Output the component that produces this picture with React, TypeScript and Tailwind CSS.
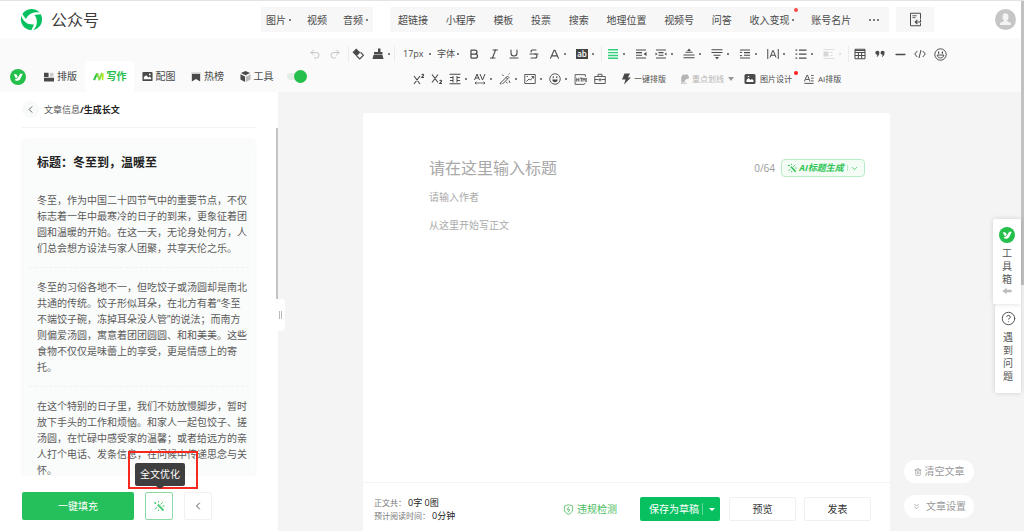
import type { ReactNode } from "react";
import { clsx } from "clsx";
import {
  Bold,
  ChevronDown,
  ChevronLeft,
  ChevronsDown,
  CircleQuestionMark,
  Italic,
  Minus,
  Redo2,
  Strikethrough,
  Trash2,
  Underline,
  Undo2,
} from "lucide-react";

type IconProps = { className?: string; children: ReactNode };

function Icon({ className = "h-3 w-3", children }: IconProps) {
  return (
    <svg
      viewBox="0 0 24 24"
      className={clsx("shrink-0", className)}
      fill="none"
      stroke="currentColor"
      strokeWidth="2.2"
      aria-hidden="true"
    >
      {children}
    </svg>
  );
}

function Dot() {
  return <span className="h-0.5 w-0.5 shrink-0 rounded-full bg-[#555]" />;
}

function Separator() {
  return <span className="mx-px h-4 w-px shrink-0 bg-[#ececec]" />;
}

type ToolProps = {
  label: string;
  menu?: boolean;
  tight?: boolean;
  className?: string;
  children: ReactNode;
};

function Tool({ label, menu, tight, className, children }: ToolProps) {
  return (
    <button type="button" aria-label={label} className={clsx("flex h-5 shrink-0 items-center", className)}>
      <span className="flex w-5 shrink-0 items-center justify-center">{children}</span>
      {menu && (
        <span className={clsx("flex shrink-0 items-center", tight ? "w-[5px]" : "w-2")}>
          <Dot />
        </span>
      )}
    </button>
  );
}

function BrandMark() {
  const blade = "M4.500 11.500A21 21 0 0 1 38 9C30 6.500 22 9 16.500 14C14 16.500 12.500 18.500 11.500 21.500C9 18 6.500 14.500 4.500 11.500Z";
  return (
    <svg viewBox="0 0 44 44" className="h-[23px] w-[23px]" aria-hidden="true">
      <g fill="#07c160">
        <path d={blade} />
        <path d={blade} transform="rotate(120 22 22)" />
        <path d={blade} transform="rotate(240 22 22)" />
      </g>
    </svg>
  );
}

function YiMark() {
  return (
    <svg viewBox="0 0 32 32" className="h-4 w-4 shrink-0" aria-hidden="true">
      <circle cx="16" cy="16" r="16" fill="#25bf4b" />
      <path d="M7.500 10.500h5l3 4.500-2.500 3.500h-1.500Z" fill="#fff" />
      <path d="M25.500 9.500h-5l-5 8c-1.200 1.800-2.500 2.500-5.500 2.500l1 3.500c5 .5 8-.5 9.500-3.500Z" fill="#fff" />
    </svg>
  );
}

function WandIcon({ className }: { className?: string }) {
  return (
    <Icon className={className}>
      <path d="M9.500 9l11.500 12" strokeWidth="3.8" />
      <path d="M15 9l4.500-4.500M3.500 19L8 14.500" strokeWidth="2" />
      <path d="M2.500 6h4M4.500 4v4M11 2v3M19 12h4M11 19v3" strokeWidth="2" />
    </Icon>
  );
}

const insertLinks = ["超链接", "小程序", "模板", "投票", "搜索", "地理位置", "视频号", "问答"];

function Header() {
  return (
    <header className="flex h-[38px] shrink-0 items-center border-t border-[#e4e4e4] bg-white text-[10px] leading-4 text-[#4a4a4a]">
      <div className="flex w-[261px] shrink-0 items-center gap-2 pl-5">
        <BrandMark />
        <h1 className="text-base text-[#3c3c3c]">公众号</h1>
      </div>
      <nav className="flex h-[25px] w-28 shrink-0 items-center justify-between bg-[#f7f7f7] px-[5px]">
        <button type="button" className="flex items-center gap-[3px]">图片<Dot /></button>
        <button type="button">视频</button>
        <button type="button" className="flex items-center gap-[3px]">音频<Dot /></button>
      </nav>
      <nav className="ml-[17px] flex h-[25px] w-[499px] shrink-0 items-center justify-between bg-[#f7f7f7] px-2">
        {insertLinks.map((item) => (
          <button key={item} type="button">{item}</button>
        ))}
        <button type="button" className="relative flex items-center gap-0.5">
          收入变现<Dot />
          <span className="absolute -top-1 -right-1 h-1 w-1 rounded-full bg-[#fa4b4b]" />
        </button>
        <button type="button">账号名片</button>
        <button type="button" aria-label="更多" className="flex gap-0.5 pr-0.5">
          <Dot /><Dot /><Dot />
        </button>
      </nav>
      <button type="button" aria-label="保存" className="ml-[7px] flex h-[25px] w-[38px] shrink-0 items-center justify-center bg-[#f7f7f7]">
        <Icon className="h-[15px] w-[15px]">
          <path d="M20 11V2H4v20h16v-4" strokeWidth="1.6" />
          <path d="M7 6h7M7 9h5" strokeWidth="1.4" />
          <path d="M20 12v4h-8M15 12.500L11.500 16l3.500 3.500" strokeWidth="1.8" />
        </Icon>
      </button>
      <button type="button" aria-label="账号" className="mr-2 ml-auto">
        <svg viewBox="0 0 42 42" className="h-[21px] w-[21px]" aria-hidden="true">
          <circle cx="21" cy="21" r="21" fill="#c6c6c6" />
          <ellipse cx="21" cy="16" rx="6" ry="7.500" fill="#f3f3f3" />
          <path d="M10 32v-3c0-2 5-3 8-5v-4h6v4c3 2 8 3 8 5v3Z" fill="#f3f3f3" />
        </svg>
      </button>
    </header>
  );
}

const tabs: { name: string; icon: ReactNode }[] = [
  {
    name: "排版",
    icon: (
      <Icon className="h-2.5 w-2.5">
        <path d="M0 2h11v10H0zM0 14h24v9H0z" fill="currentColor" stroke="none" />
        <path d="M14 2h9v9h-9z" fill="#ccc" stroke="none" />
      </Icon>
    ),
  },
  {
    name: "写作",
    icon: (
      <svg viewBox="0 0 24 20" className="h-[9px] w-[11px]" aria-hidden="true" fill="none" strokeWidth="4.500" strokeLinejoin="round">
        <path d="M2 18L9 3" stroke="#2cc43f" />
        <path d="M9 3l5 14 6-15" stroke="#8be04a" />
        <path d="M22 3l-1 15" stroke="#b5ea1f" strokeWidth="3.500" />
      </svg>
    ),
  },
  {
    name: "配图",
    icon: (
      <Icon className="h-[11px] w-[11px]">
        <rect x="1" y="2" width="22" height="20" rx="2" fill="currentColor" stroke="none" />
        <path d="M4 18v-5l5-4 5 5 3-2 3 3v3Z" fill="#fff" stroke="none" />
        <circle cx="17" cy="7.500" r="2" fill="#fff" stroke="none" />
      </Icon>
    ),
  },
  {
    name: "热榜",
    icon: (
      <Icon className="h-2.5 w-2.5">
        <path d="M1 1h22v4H1z" fill="#ccc" stroke="none" />
        <path d="M2 5h20v18l-10-6-10 6Z" fill="currentColor" stroke="none" />
      </Icon>
    ),
  },
  {
    name: "工具",
    icon: (
      <Icon className="h-[11px] w-[11px]">
        <path d="M12 0l10 4.500-10 5-10-5Z" fill="currentColor" stroke="none" />
        <path d="M1 7l10 5v12L1 18.500Z" fill="currentColor" stroke="none" />
        <path d="M23 7l-10 5v12l10-5.500Z" fill="#bbb" stroke="none" />
      </Icon>
    ),
  },
];

function TabBar() {
  return (
    <div className="flex shrink-0 items-end">
      <div className="flex h-[31px] w-9 items-center pl-2.5"><YiMark /></div>
      {tabs.map((tab) => (
        <button
          key={tab.name}
          type="button"
          className={clsx(
            "flex h-[31px] w-[49px] items-center justify-center gap-[3px] rounded-t text-[10px]",
            tab.name === "写作" ? "bg-white font-bold text-[#25bf4b]" : "text-[#4a4a4a]"
          )}
        >
          {tab.icon}
          {tab.name}
        </button>
      ))}
      <label className="ml-1.5 flex h-[31px] w-5 items-center">
        <input type="checkbox" defaultChecked aria-label="插件开关" className="peer sr-only" />
        <span className="flex h-[7px] w-5 items-center justify-end rounded-full bg-[#e2efe6]">
          <span className="h-[13px] w-[13px] shrink-0 rounded-full bg-[#25bf4b]" />
        </span>
      </label>
    </div>
  );
}

function FormatBar() {
  return (
    <div className="min-w-0 flex-1 pt-[6px] text-[#4a4a4a]">
      <div className="flex h-5 items-center">
        <button type="button" aria-label="撤销" className="flex w-4 justify-center text-[#c4c4c4]"><Undo2 size={12} /></button>
        <button type="button" aria-label="重做" className="flex w-6 justify-center text-[#c4c4c4]"><Redo2 size={12} /></button>
        <Separator />
        <button type="button" aria-label="清除格式" className="flex w-4 justify-center">
          <Icon>
            <path d="M8.500 1l8 8-7.500 7.500-8-8Z" fill="currentColor" stroke="none" />
            <path d="M17 8.500l6 6-7.500 7.500-6-6" />
          </Icon>
        </button>
        <Tool label="格式刷" menu tight className="w-[27px] justify-end">
          <Icon>
            <path d="M12 1h5v8h-5zM4 8h17v5H4z" fill="currentColor" stroke="none" />
            <path d="M3 14h18l2 8H1Z" fill="currentColor" stroke="none" />
          </Icon>
        </Tool>
        <Separator />
        <span className="ml-[7px] flex w-[34px] items-center">
          <select aria-label="字号" className="w-[26px] appearance-none bg-transparent text-[9px] leading-4">
            <option>17px</option>
          </select>
          <Dot />
        </span>
        <span className="flex w-[27px] items-center">
          <select aria-label="字体" className="w-5 appearance-none bg-transparent text-[9px] leading-4">
            <option>字体</option>
          </select>
          <Dot />
        </span>
        <Tool label="加粗"><Bold size={12} strokeWidth={2.5} /></Tool>
        <Tool label="斜体"><Italic size={12} strokeWidth={2.2} /></Tool>
        <Tool label="下划线"><Underline size={12} strokeWidth={2.2} /></Tool>
        <Tool label="删除线"><Strikethrough size={12} strokeWidth={2.2} /></Tool>
        <Tool label="文字颜色" menu>
          <Icon className="h-[11px] w-[11px]"><path d="M3 21L11 3h2l8 18M6.500 15h11" strokeWidth="2.500" /></Icon>
        </Tool>
        <Tool label="背景色" menu>
          <span className="h-2.5 w-3 bg-[#444] text-center text-[8px] leading-[9px] font-semibold text-white">ab</span>
        </Tool>
        <Separator />
        <Tool label="对齐" menu className="text-[#2fd07c]">
          <Icon><path d="M2 3.500h20M2 9.200h20M2 14.900h20M2 20.600h20" strokeWidth="2.800" /></Icon>
        </Tool>
        <Tool label="增加缩进">
          <Icon>
            <path d="M2 4h20M2 9.300h12M2 14.600h12M2 20h20" />
            <path d="M23 8v8l-6-4Z" fill="currentColor" stroke="none" />
          </Icon>
        </Tool>
        <Tool label="两端缩进" menu>
          <Icon>
            <path d="M2 4h20M7 9.300h10M7 14.600h10M2 20h20" />
            <path d="M1 9l4 3-4 3ZM23 9l-4 3 4 3Z" fill="currentColor" stroke="none" />
          </Icon>
        </Tool>
        <Tool label="段前距" menu>
          <Icon>
            <path d="M5 8.500h14M1 14h22M1 19.500h22" />
            <path d="M12 1l4 5H8Z" fill="currentColor" stroke="none" />
          </Icon>
        </Tool>
        <Tool label="段后距" menu>
          <Icon>
            <path d="M1 3.500h22M1 9h22M5 14.500h14" />
            <path d="M12 23l4-5H8Z" fill="currentColor" stroke="none" />
          </Icon>
        </Tool>
        <Tool label="行高" menu>
          <Icon>
            <path d="M2 4h20M10 9.300h12M10 14.600h12M2 20h20" />
            <path d="M1 10h6l-3-3ZM1 14h6l-3 3Z" fill="currentColor" stroke="none" />
          </Icon>
        </Tool>
        <Tool label="字间距" menu>
          <Icon><path d="M1.500 2v20M22.500 2v20M6 19L11.500 5h1L18 19M8 14.500h8" strokeWidth="2" /></Icon>
        </Tool>
        <Tool label="列表" menu>
          <Icon><path d="M8 4h15M8 12h15M8 20h15M1 4h3.500M1 12h3.500M1 20h3.500" strokeWidth="2.500" /></Icon>
        </Tool>
        <Tool label="图文环绕" menu className="opacity-20">
          <Icon>
            <path d="M1 7h10v10H1z" fill="currentColor" stroke="none" />
            <path d="M1 3h22M14 9h5M14 15h5M1 21h22" strokeWidth="1.500" />
          </Icon>
        </Tool>
        <Separator />
        <Tool label="表格">
          <Icon><path d="M2 2.500h20v19H2zM2 5h20M2 9h20M2 15h20M8.700 9v12M15.300 9v12" strokeWidth="2" /></Icon>
        </Tool>
        <Tool label="引用">
          <Icon className="h-2.5 w-2.5">
            <path d="M6 4a4.500 4.500 0 0 1 4.500 5c0 5-2.500 9-7 11 1.500-2 2.200-4 2-6A5 5 0 1 1 6 4ZM18.500 4A4.500 4.500 0 0 1 23 9c0 5-2.500 9-7 11 1.500-2 2.200-4 2-6a5 5 0 1 1 .5-10Z" fill="currentColor" stroke="none" />
          </Icon>
        </Tool>
        <Tool label="分隔线"><Minus size={15} strokeWidth={2.5} /></Tool>
        <Tool label="代码">
          <Icon><path d="M6.500 6L1.500 12l5 6M17.500 6l5 6-5 6M14 4l-4 16" strokeWidth="2" /></Icon>
        </Tool>
        <Tool label="表情">
          <Icon className="h-[13px] w-[13px]">
            <circle cx="12" cy="12" r="10.500" strokeWidth="1.800" />
            <path d="M6 13h12c0 7-12 7-12 0Z" strokeWidth="1.800" />
            <path d="M8.500 6.500v4M15.500 6.500v4" />
          </Icon>
        </Tool>
      </div>

      <div className="mt-[5px] ml-[102px] flex h-5 items-center text-[8px] leading-4">
        <Tool label="上标">
          <Icon><path d="M2 6l12 16M14 6L2 22M17.500 4c1-2.500 4.500-1.500 3.500.8L17.500 9H22" strokeWidth="2.200" /></Icon>
        </Tool>
        <Tool label="下标" className="w-4 justify-center">
          <Icon><path d="M2 3l12 16M14 3L2 19M17.500 16c1-2.500 4.500-1.500 3.500.8L17.500 21H22" strokeWidth="2.200" /></Icon>
        </Tool>
        <Tool label="首行" menu tight>
          <Icon><path d="M1 2.500h22M1 21.500h22M8 6v13M16 6v13M2 9h6M16 9h6M2 15h6M16 15h6" strokeWidth="2" /></Icon>
        </Tool>
        <Tool label="字距" menu tight>
          <Icon>
            <path d="M1 14L6 2l5 12M3 10h6M12 2l5 12 5-12" strokeWidth="2" />
            <path d="M2 20h20M5 17.500L2 20l3 2.500M19 17.500l3 2.500-3 2.500" strokeWidth="1.600" />
          </Icon>
        </Tool>
        <Tool label="样式" menu tight>
          <Icon><path d="M2 21L17 6l3 3L7 22M5 22L2 21M14 9l3 3M20 15l2 5M9 6L7 3M19 3l2-2M14 18l3 2" strokeWidth="1.900" /></Icon>
        </Tool>
        <Tool label="图表" menu tight>
          <Icon><path d="M1.500 3h21v18h-21zM5 17l5-5 3 2 6-7M15 7h4v4M5 7h3" strokeWidth="1.800" /></Icon>
        </Tool>
        <Tool label="表情符号" menu tight>
          <Icon>
            <circle cx="12" cy="12" r="10.500" strokeWidth="1.800" />
            <path d="M6.500 13h11c0 7-11 7-11 0Z" fill="currentColor" stroke="none" />
            <path d="M8.500 6.500v4M15.500 6.500v4" />
          </Icon>
        </Tool>
        <Tool label="HTML">
          <Icon className="h-[13px] w-[13px]">
            <path d="M21 7V3H2v18h17l2-3" strokeWidth="1.600" />
            <path d="M5 9v7M9 9v7M5 12.500h4M11 9.500h5M13.500 9.500V16M16.500 16V9.500l2 3 2-3V16M22.500 9v6.500h2" strokeWidth="1.600" />
          </Icon>
        </Tool>
        <Tool label="工具箱">
          <Icon><path d="M1.500 7h21v14h-21zM8 7V2.500h8V7M1.500 13h7M15.500 13h7M12 10v7M8.500 13.500h7" strokeWidth="1.800" /></Icon>
        </Tool>
        <button type="button" className="ml-2.5 flex items-center gap-0.5">
          <Icon><path d="M9 1h11l-4 8h6L8 23l3-10H4Z" fill="currentColor" stroke="none" /></Icon>
          一键排版
          <span className="ml-0.5"><Dot /></span>
        </button>
        <button type="button" className="ml-2.5 flex items-center gap-0.5 text-[#b5b5b5]">
          <Icon className="h-2.5 w-2.5">
            <path d="M6 2l13-1 3 9-8 3-4 7H3V8Z" fill="currentColor" stroke="none" />
            <path d="M2 22h14" />
          </Icon>
          重点划线
          <span className="ml-0.5 border-x-[3px] border-t-4 border-x-transparent border-t-[#999]" />
        </button>
        <button type="button" className="relative ml-2.5 flex items-center gap-1">
          <Icon>
            <rect x="1" y="2" width="22" height="20" rx="3" fill="currentColor" stroke="none" />
            <path d="M5 18v-4l4-4 4 4 3-2 3 3v3Z" fill="#fff" stroke="none" />
            <circle cx="9" cy="7" r="1.600" fill="#fff" stroke="none" />
          </Icon>
          图片设计
          <span className="absolute top-0 -right-1.5 h-1 w-1 rounded-full bg-[#ff2020]" />
        </button>
        <button type="button" className="ml-3 flex items-center gap-1">
          <Icon className="h-2.5 w-2.5"><path d="M1 18L7 3h1.500l6 15M4 13h8M17 3.500h6M17 10h6M17 16.500h6M1 22.500h22" /></Icon>
          AI排版
        </button>
      </div>
    </div>
  );
}

const paragraphs = [
  "冬至，作为中国二十四节气中的重要节点，不仅标志着一年中最寒冷的日子的到来，更象征着团圆和温暖的开始。在这一天，无论身处何方，人们总会想方设法与家人团聚，共享天伦之乐。",
  "冬至的习俗各地不一，但吃饺子或汤圆却是南北共通的传统。饺子形似耳朵，在北方有着“冬至不端饺子碗，冻掉耳朵没人管”的说法；而南方则偏爱汤圆，寓意着团团圆圆、和和美美。这些食物不仅仅是味蕾上的享受，更是情感上的寄托。",
  "在这个特别的日子里，我们不妨放慢脚步，暂时放下手头的工作和烦恼。和家人一起包饺子、搓汤圆，在忙碌中感受家的温馨；或者给远方的亲人打个电话、发条信息，在问候中传递思念与关怀。",
];

function Sidebar() {
  return (
    <aside className="relative flex w-[278px] shrink-0 flex-col bg-white">
      <div className="mx-[22px] flex h-9 shrink-0 items-center gap-[5px] border-b border-[#f3f3f3] text-[9px] text-[#555]">
        <button type="button" aria-label="返回" className="flex h-[17px] w-[17px] items-center justify-center rounded-full bg-[#f8fafa]">
          <ChevronLeft size={11} />
        </button>
        <p>文章信息<b className="text-[#222]">/生成长文</b></p>
      </div>
      <div className="min-h-0 flex-1 overflow-hidden px-[23px] pt-3">
        <article className="rounded-t bg-[#fafcfb] px-1.5 pt-[13px] shadow-[0_0_4px_rgba(0,0,0,0.06)]">
          <h2 className="px-2 text-xs leading-5 font-bold text-[#222]">标题：冬至到，温暖至</h2>
          <div className="mt-2 divide-y divide-dashed divide-[#eff2f1]">
            {paragraphs.map((text) => (
              <p key={text} className="py-[11px] pl-2 text-[10px] leading-4 text-[#5a5a5a]">{text}</p>
            ))}
          </div>
        </article>
      </div>
      <div className="flex shrink-0 gap-[11px] px-[22px] pt-4 pb-[11px]">
        <button type="button" className="h-7 w-28 rounded-xs bg-[#25bf5b] text-[10px] text-white">一键填充</button>
        <div className="relative">
          <button type="button" aria-label="全文优化" className="flex h-7 w-7 items-center justify-center rounded-xs border border-[#8cdba6] text-[#4ecb78]">
            <WandIcon className="h-3 w-3" />
          </button>
          <div className="absolute bottom-[31px] -left-[17px] border-2 border-[#f7291f] pt-2.5 pr-[11px] pb-px pl-[5px]">
            <div role="tooltip" className="flex h-[23px] w-[50px] items-center justify-center rounded-xs bg-[#3f3f3f] text-[10px] text-white">
              全文优化
            </div>
            <span className="absolute -bottom-0.5 left-[26px] border-x-4 border-t-[3px] border-x-transparent border-t-[#3f3f3f]" />
          </div>
        </div>
        <button type="button" aria-label="收起" className="flex h-7 w-7 items-center justify-center rounded-xs border border-[#f1f1f1] text-[#555]">
          <ChevronLeft size={12} />
        </button>
      </div>
      <span className="absolute top-9 right-0 h-[171px] w-0.5 bg-[#c4c4c4]" />
      <button type="button" aria-label="调整宽度" className="absolute top-[207px] -right-[7px] flex h-8 w-[10px] items-center justify-center gap-px rounded-r-sm bg-white">
        <span className="h-2 w-px bg-[#bbb]" />
        <span className="h-2 w-px bg-[#bbb]" />
      </button>
    </aside>
  );
}

function Editor() {
  return (
    <section className="mt-[21px] ml-[85px] flex min-w-0 flex-1 flex-col rounded-t-xs bg-white">
      <div className="flex flex-1 flex-col pt-[45px] pr-[25px] pl-[66px] text-[10px]">
        <div className="flex h-5 items-center">
          <input aria-label="标题" placeholder="请在这里输入标题" className="min-w-0 flex-1 text-base leading-5 outline-none placeholder:text-[#a8a8a8]" />
          <span className="mr-1.5 text-[#999]">0/64</span>
          <button type="button" className="flex h-[18px] w-[84px] items-center justify-center gap-0.5 rounded border border-[#b9eec5] bg-[#f3fdf5] text-[9px] text-[#2fc455]">
            <WandIcon className="h-2.5 w-2.5" />
            <b className="italic">AI标题生成</b>
            <span className="ml-px h-1.5 w-px bg-[#b9eec5]" />
            <ChevronDown size={9} />
          </button>
        </div>
        <input aria-label="作者" placeholder="请输入作者" className="mt-[9px] h-5 outline-none placeholder:text-[#aaa]" />
        <textarea aria-label="正文" placeholder="从这里开始写正文" className="mt-2 flex-1 resize-none leading-5 outline-none placeholder:text-[#aaa]" />
      </div>
      <footer className="flex h-[49px] shrink-0 items-center border-t border-[#f3f3f3] pt-1 pr-[19px] pl-[11px] text-[10px] text-[#333]">
        <div className="text-[8px] leading-[13px] text-[#777]">
          <p>正文共： <span className="text-[9px] text-[#222]">0字 0图</span></p>
          <p>预计阅读时间： <span className="text-[9px] text-[#222]">0分钟</span></p>
        </div>
        <button type="button" className="mr-[23px] ml-auto flex items-center gap-[3px] text-[#4bbd5e]">
          <Icon className="h-[11px] w-[11px]">
            <path d="M12 1.500l9 3V12c0 5-4 8.500-9 10.500C7 20.500 3 17 3 12V4.500Z" strokeWidth="1.800" />
            <path d="M13 6l-4 6.500h6L11 18" strokeWidth="1.800" />
          </Icon>
          违规检测
        </button>
        <div className="mr-[9px] flex h-6 w-20 items-center rounded-xs bg-[#07c160] text-white">
          <button type="button" className="flex-1 pl-1.5">保存为草稿</button>
          <button type="button" aria-label="更多保存方式" className="flex h-3 w-[18px] items-center justify-center border-l border-[#5fd897]">
            <span className="border-x-[3px] border-t-[3px] border-x-transparent border-t-white" />
          </button>
        </div>
        <button type="button" className="mr-2 h-6 w-[67px] rounded-xs border border-[#f0f0f0]">预览</button>
        <button type="button" className="h-6 w-[67px] rounded-xs border border-[#f0f0f0]">发表</button>
      </footer>
    </section>
  );
}

function SidePanel() {
  return (
    <div className="absolute top-[127px] right-[3px] flex flex-col items-end text-[10px] leading-[13px] text-[#555]">
      <button type="button" className="z-10 flex w-7 flex-col items-center rounded-l-xs bg-white pt-2 pb-2 shadow-[0_0_5px_rgba(0,0,0,0.15)]">
        <YiMark />
        <span className="mt-1 w-2.5">工具箱</span>
        <Icon className="h-2.5 w-2.5 text-[#bbb]"><path d="M23 9v6H11v5L1 12l10-8v5Z" fill="currentColor" stroke="none" /></Icon>
      </button>
      <button type="button" className="flex w-[26px] flex-col items-center rounded-l-xs bg-white pt-[7px] pb-2.5 shadow-[0_0_5px_rgba(0,0,0,0.15)]">
        <CircleQuestionMark size={15} strokeWidth={1.6} />
        <span className="mt-[5px] w-2.5 leading-[13px]">遇到问题</span>
      </button>
    </div>
  );
}

export default function App() {
  return (
    <div className="relative flex h-screen flex-col overflow-hidden bg-[#f4f4f4] font-['Open_Sans','Noto_Sans_CJK_SC',sans-serif]" lang="zh-CN">
      <Header />
      <div className="flex h-[54px] shrink-0 bg-[#fafafa]">
        <TabBar />
        <FormatBar />
      </div>
      <main className="relative flex min-h-0 flex-1">
        <Sidebar />
        <Editor />
        <div className="flex w-[134px] shrink-0 flex-col justify-end gap-3 pb-[13px] pl-3.5 text-[10px] text-[#999]">
          <button type="button" className="flex h-[23px] w-[70px] items-center justify-center gap-[3px] rounded-full bg-white">
            <Trash2 size={8} />清空文章
          </button>
          <button type="button" className="flex h-[23px] w-[70px] items-center justify-center gap-[5px] rounded-full bg-white">
            <ChevronsDown size={9} />文章设置
          </button>
        </div>
        <SidePanel />
      </main>
      <span className="absolute top-px right-0 h-[284px] w-[3px] bg-[#c1c1c1]" />
    </div>
  );
}
